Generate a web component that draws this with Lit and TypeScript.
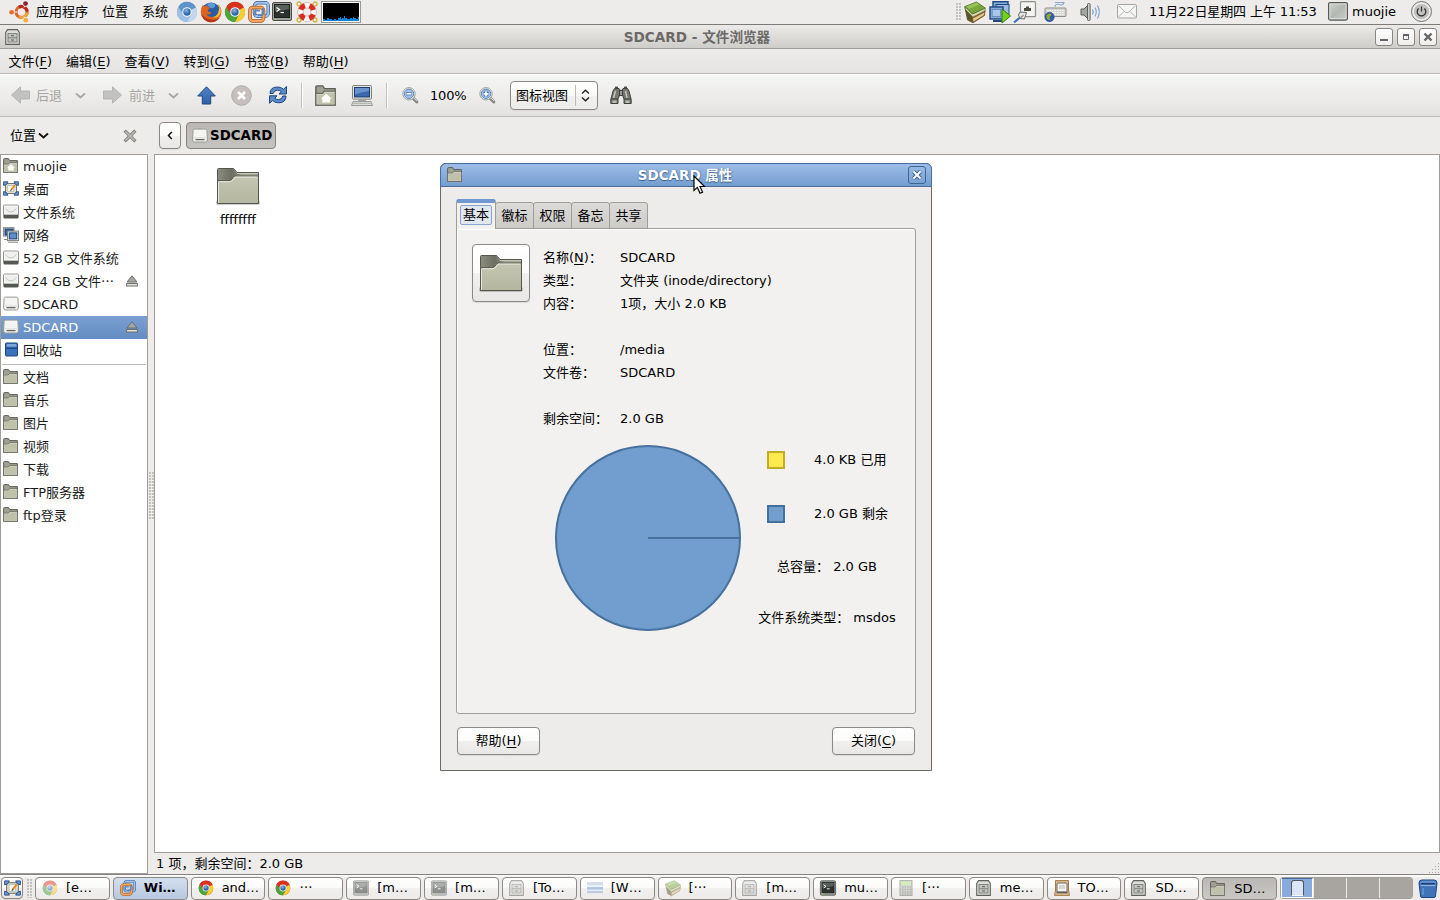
import { LitElement, html, svg, css, TemplateResult } from "lit";
import { customElement } from "lit/decorators.js";
import { classMap } from "lit/directives/class-map.js";

type Glyph = ReturnType<typeof svg>;

const icon = (size: number, box: string, body: Glyph, height = size): TemplateResult =>
  html`<svg class="ico" width=${size} height=${height} viewBox=${box}>${body}</svg>`;

const chromeBody = (a: string, b: string, c: string) => svg`
  <circle cx="11" cy="11" r="10" fill=${a}/>
  <path d="M11 11 L2.3 6 A10 10 0 0 0 11 21 L15 13.5 Z" fill=${b}/>
  <path d="M11 11 L19.9 6.4 A10 10 0 0 1 11 21 L15.4 13 Z" fill=${c}/>
  <path d="M11 6.4 L20 6.4 A10 10 0 0 0 2.3 6 L6.6 12.6 Z" fill=${a}/>
  <circle cx="11" cy="11" r="4.8" fill="#f4f6f8"/>
  <circle cx="11" cy="11" r="3.7" fill="url(#gBall)"/>`;

const chrome = chromeBody("#d8321f", "#4aa53a", "#f8cf2b");
const chromium = chromeBody("#5f93c9", "#9fc0e2", "#c3d8ee");

const ubuntu = svg`
  <circle cx="12.6" cy="12" r="5.5" fill="none" stroke="#e0662a" stroke-width="3.2"/>
  <path d="M9.8 7.300 A5.5 5.5 0 0 1 18.100 11.400" fill="none" stroke="#b9271d" stroke-width="3.2"/>
  <path d="M18.100 12.600 A5.5 5.5 0 0 1 9.800 16.700" fill="none" stroke="#eda03c" stroke-width="3.2"/>
  <path d="M8.500 12 L4 12 M15 7.500 L17 4 M15 16.500 L17 20" stroke="#edecea" stroke-width="1"/>
  <circle cx="2.6" cy="12.200" r="2.300" fill="#e8692c"/>
  <circle cx="16.500" cy="3.600" r="3.100" fill="#edecea"/><circle cx="16.500" cy="3.600" r="2.400" fill="#8f2430"/>
  <circle cx="16.800" cy="20.200" r="3.100" fill="#edecea"/><circle cx="16.800" cy="20.200" r="2.400" fill="#f0ae43"/>`;

const firefox = svg`
  <circle cx="11" cy="11" r="9.6" fill="#2a5ca6"/>
  <path d="M7 3 Q11 1 15 3 Q16 6 13 7 Q9 8 7 3Z" fill="#5f9ad8"/>
  <path d="M3 3.4 Q1 6 .8 11 A10.3 10.3 0 0 0 21.4 11 Q21.5 6 18 3 Q20 7 18.6 10 Q18 15 13 16 Q8 16.500 6.500 13 Q9 14 11 12.400 Q12 11.500 10 11 Q7 11 8 8.500 Q9.500 8 10 7 Q7.500 6.600 7 4.600 Q5 4.600 4 6Z" fill="#e0651c"/>
  <path d="M18 3 Q20 7 18.600 10 Q18 15 13 16 Q18 18 20.500 12 Q22 7 18 3Z" fill="#f8b838"/>
  <path d="M1.200 13 Q3 20 10 21.200 Q16 21.500 19.500 17 Q14 20 8.500 18 Q3.500 16 1.200 13Z" fill="#b3361a"/>`;

const vmware = svg`
  <rect x="6.500" y="1.800" width="13.700" height="13.500" rx="3" fill="none" stroke="#345f96" stroke-width="3.400"/>
  <rect x="6.500" y="1.800" width="13.700" height="13.500" rx="3" fill="none" stroke="#a4c3ea" stroke-width="1.900"/>
  <rect x="2" y="6.500" width="13.500" height="13.500" rx="3" fill="none" stroke="#a8541b" stroke-width="3.600"/>
  <rect x="2" y="6.500" width="13.500" height="13.500" rx="3" fill="none" stroke="#f3a45d" stroke-width="2.200"/>
  <path d="M7 14.500 V10.500 Q7 9.500 8.500 9.500 H12" fill="none" stroke="#5b86be" stroke-width="1.800"/>
  <path d="M10 14 H13 Q15 14 15 12 V7" fill="none" stroke="#5b86be" stroke-width="2"/>`;

const terminal = svg`
  <rect x=".5" y=".5" width="19" height="18" rx="1.500" fill="#9fa19d" stroke="#4c4f4b"/>
  <rect x="2.500" y="2.500" width="15" height="13" fill="#2c322f" stroke="#1b1e1c"/>
  <path d="M3 3 H17 V7 Q10 9 3 9Z" fill="#59615d"/>
  <path d="M4.500 5.500 L7.500 7.500 L4.500 9.500" fill="none" stroke="#fff" stroke-width="1.200"/>
  <path d="M8.500 10.500 H12" stroke="#fff" stroke-width="1.200"/>
  <rect x="2.500" y="16.500" width="2" height="1" fill="#8ae234"/>`;

const buoy = svg`
  <circle cx="3" cy="3" r="2" fill="none" stroke="#d2b43a" stroke-width="1.300"/><circle cx="19" cy="3" r="2" fill="none" stroke="#d2b43a" stroke-width="1.300"/>
  <circle cx="3" cy="19" r="2" fill="none" stroke="#d2b43a" stroke-width="1.300"/><circle cx="19" cy="19" r="2" fill="none" stroke="#d2b43a" stroke-width="1.300"/>
  <circle cx="11" cy="11" r="6.700" fill="none" stroke="#a9a6a0" stroke-width="6"/>
  <circle cx="11" cy="11" r="6.700" fill="none" stroke="#fbf8f4" stroke-width="5"/>
  <circle cx="11" cy="11" r="6.700" fill="none" stroke="#dc2a20" stroke-width="5" stroke-dasharray="5.800 4.724" stroke-dashoffset="-2.362"/>`;

const monitor = svg`
  <rect x=".5" y=".5" width="39" height="21" fill="#fff" stroke="#9b9995"/>
  <rect x="2" y="2" width="36" height="18" fill="#000"/>
  <path d="M2 20 V18 H4 V19 H6 V17 H8 V18 H11 V19 H13 V18 H15 V19 H17 V17 H19 V16 H20 V18 H21 V17 H23 V15 H24 V17 H26 V18 H29 V17 H31 V18 H32 V16 H33 V17 H35 V18 H37 V16 H38 V20Z" fill="#0a84d8"/>`;

const books = svg`
  <path d="M.8 6 L8.500 12 L21.200 9 L20.500 14.500 L9 21.800 L3.500 19 Z" fill="#8a5a2b" stroke="#5f3d18" stroke-width=".7"/>
  <path d="M9 17.500 L20.500 11.500 L20 14 L9.500 20.500Z" fill="#e3c98d"/>
  <path d="M1.500 8 L7.500 14.500 L8.500 20.500 L4 18.500 Z" fill="#4f5a2b"/>
  <path d="M8.500 13 L21.200 7 L21 9.700 L9 16 L1.500 8.500 L1 5.500Z" fill="#ddd8b4" stroke="#57782f" stroke-width=".6"/>
  <path d="M1 5.500 L12.500 1 L21.200 7 L8.500 13 Z" fill="#78a83c" stroke="#46692a" stroke-width=".8"/>
  <path d="M2 5.500 L12.500 1.400 L15.500 3.400 L5 8Z" fill="#98c257"/>`;

const vmPlay = svg`
  <rect x="4" y=".7" width="15" height="11" fill="#87abd9" stroke="#20497f" stroke-width="1.400"/>
  <rect x="7" y="3.500" width="13" height="10" fill="#9dbbe2" stroke="#20497f"/>
  <rect x="1" y="6" width="13" height="12" fill="#87abd9" stroke="#20497f" stroke-width="1.400"/>
  <rect x="3.200" y="8.500" width="8.500" height="7" fill="#a9c5e8" stroke="#5c87bb" stroke-width=".8"/>
  <rect x="4" y="19" width="10" height="2" fill="#20497f"/>
  <path d="M13 8 L21.500 15 L13 22Z" fill="#73d216" stroke="#3c7a10"/>`;

const wired = svg`
  <rect x="6.500" y=".7" width="15" height="15" rx="1" fill="#f4f4f2" stroke="#8e908c" stroke-width="1.200"/>
  <path d="M10 10 V7 H12 V5.500 H15 V7 H17 V10Z" fill="#4b4a3c"/>
  <path d="M0 21.500 L6 16.500" stroke="#3e6cb0" stroke-width="2"/>
  <path d="M4.500 14 L6 11 L12.500 11.500 L10.500 18 L6 17.500Z" fill="#e7e8e5" stroke="#6a6c68"/>
  <path d="M6.500 17 L9.500 14" stroke="#8f918d" stroke-width="1.400"/>`;

const keyboard = svg`
  <path d="M11 6 Q11 2.500 15 3.500 Q19 5 20 1.500 H11" fill="none" stroke="#89a8cf" stroke-width="1.100"/>
  <rect x="1" y="7" width="21" height="8.500" rx="1" fill="#d7d8d4" stroke="#8b8d88"/>
  <path d="M3 9.500 H20 M3 11.500 H20 M3 13.500 H20" stroke="#f6f6f4" stroke-dasharray="1.500 1"/>
  <circle cx="5.500" cy="16" r="4.700" fill="#305f9f" stroke="#234a80" stroke-width=".6"/>
  <path d="M2.500 14 Q4.500 12 6.500 12.500 L7.500 14 L5.500 16 L6.500 18.500 L4.500 19 L2.500 17Z" fill="#98a83c"/>`;

const speaker = svg`
  <path d="M1 8 H4 L8 4 V18 L4 14 H1Z" fill="#a4a6a2" stroke="#5d5f5b"/>
  <rect x="7.500" y="2.500" width="2.600" height="17" rx="1" fill="#d2d3d0" stroke="#5d5f5b"/>
  <path d="M12.500 8.500 Q14 11 12.500 13.500" fill="none" stroke="#7ba0cd" stroke-width="1.300"/>
  <path d="M15 6.500 Q17.500 11 15 15.500 M17.500 4.500 Q21 11 17.500 17.500" fill="none" stroke="#7ba0cd" stroke-width="1.100"/>`;

const mail = svg`
  <rect x=".5" y=".5" width="19" height="13.500" rx="1" fill="#f5f5f3" stroke="#a5a5a1"/>
  <path d="M1.500 1.500 L8 8 Q10 9.500 12 8 L18.500 1.500 M1.500 13 L7 7.500 M18.500 13 L13 7.500" fill="none" stroke="#b5b5b1"/>`;

const userSquare = svg`
  <rect x=".6" y=".6" width="18.800" height="17.500" rx="1.500" fill="#c1c5c0" stroke="#565956" stroke-width="1.200"/>
  <rect x="2" y="2" width="16" height="14.500" fill="url(#gUser)" stroke="#dfe1de" stroke-width=".8"/>`;

const power = svg`
  <circle cx="10.500" cy="10.500" r="10" fill="#e4e4e2" stroke="#737571" stroke-width="1"/>
  <circle cx="10.500" cy="10.500" r="8.200" fill="#c1c1bf" stroke="#f5f5f4"/>
  <path d="M7.600 7.500 A4.300 4.300 0 1 0 13.400 7.500 M10.500 5.500 V10.500" fill="none" stroke="#353735" stroke-width="1.300"/>`;

const cabinet = svg`
  <path d="M.7 15.400 V3.500 L2.500 .6 H12.500 L14.300 3.500 V15.400Z" fill="#dddedb" stroke="#5f615d" stroke-width="1.100" stroke-linejoin="round"/>
  <rect x="3" y="4.500" width="9" height="8.500" fill="#c3c5c1" stroke="#7b7d79" stroke-width=".9"/>
  <path d="M3 8.700 H12" stroke="#7b7d79" stroke-width=".9"/>
  <path d="M6 6.700 H9 M6 11 H9" stroke="#5f615d" stroke-width="1"/>`;

const smallFolder = svg`
  <path d="M.6 14.400 V1.500 Q.6 .6 1.500 .6 H5.500 L6.800 2.600 H14.400 V14.400Z" fill="#9fa192" stroke="#5d5f57"/>
  <path d="M1.200 14 V6.500 H5.500 L6.800 5 H14 V14Z" fill="#c0c1ab" stroke="#e3e3d8" stroke-width=".7"/>
  <path d="M.6 14.400 V6 H5.400 L6.600 4.400 H14.400 V14.400Z" fill="none" stroke="#6a6c62" stroke-width=".8"/>`;

const homeFolder = svg`${smallFolder}<path d="M8 6 L12 9.800 H10.800 V12.500 H5.200 V9.800 H4Z" fill="#fbfbf8"/>`;

const bigFolder = svg`
  <rect x="0" y="33" width="44" height="5" rx="2" fill="#000" opacity=".2"/>
  <path d="M1.500 36.500 V2.500 Q1.500 1.500 2.500 1.500 H17 Q18 1.500 18.500 2.500 L21 5.500 H42.500 V36.500Z" fill="#a3a594" stroke="#55574e" stroke-width="1"/>
  <path d="M2 14 V2 H17.500 L20.500 6 H30 L19 9 Q17 9 15.500 12 L14 14Z" fill="url(#gTab)"/>
  <path d="M21 6.500 H42" stroke="#c5c6b8"/>
  <path d="M1.500 36.500 V15 Q1.500 13.600 2.900 13.600 H13.500 Q15 13.500 16 12 Q17.500 9 19 9 H42.500 V36.500Z" fill="url(#gFold)" stroke="#55574e" stroke-width="1"/>
  <path d="M2.500 36 V15.300 Q2.500 14.700 3.200 14.700 H14 Q16 14.500 17 12.800 Q18.500 10.100 19.500 10.100 H41.500" fill="none" stroke="#e6e7dc" stroke-width="1"/>`;

const desktopIco = svg`
  <rect x="2.500" y="2.500" width="11" height="10" fill="#dfe0d6" stroke="#73756e"/>
  <path d="M.6 4.500 V.8 H5 L3.500 3.500Z M15.400 4.500 V.8 H11 L12.500 3.500Z M.6 10.500 V14.200 H5 L3.500 11.500Z M15.400 10.500 V14.200 H11 L12.500 11.500Z" fill="#6c96ce" stroke="#2a4f8a" stroke-width=".9"/>
  <rect x="4.800" y="4.500" width="6" height="6" fill="#fff" stroke="#9fa892" stroke-width=".6"/>
  <path d="M8 9 L12 4" stroke="#ea8517" stroke-width="1.800"/><path d="M7.400 10 L8.600 8.500" stroke="#444"/>`;

const disk = svg`
  <rect x=".6" y="1.100" width="14.800" height="13" rx="1" fill="#e3e4e1" stroke="#83857f"/>
  <rect x="1" y="10.500" width="14" height="3.600" fill="#555753"/>
  <rect x="1.600" y="2" width="12.800" height="8" fill="#eff0ee" stroke="#fafaf9" stroke-width=".8"/>
  <path d="M2.500 4.500 Q8 11.500 13.500 4.500" fill="none" stroke="#c6c8c3"/>`;

const removable = svg`
  <path d="M2.500 1.100 H13.500 Q14.700 1.100 14.900 2.500 L15.400 11 Q15.400 14 13.500 14 H2.500 Q.6 14 .6 11 L1.100 2.500 Q1.300 1.100 2.500 1.100Z" fill="#f4f4f2" stroke="#989a95"/>
  <path d="M1.500 10 H14.500" stroke="#d9dad7"/>
  <path d="M3.500 11.600 H12.500" stroke="#646661" stroke-width="1.300"/>`;

const network = svg`
  <rect x=".5" y=".6" width="10.500" height="8.500" fill="#e8e9e7" stroke="#8a8c88"/>
  <rect x="2" y="2" width="8" height="6" fill="#3967a8" stroke="#1e3f73"/>
  <path d="M1 12.500 H5 V10.500" fill="none" stroke="#8a8c88" stroke-width="1.200"/>
  <rect x="4.500" y="4.100" width="11" height="9.500" fill="#f0f0ee" stroke="#7d7f7b"/>
  <rect x="6.300" y="5.900" width="7.500" height="6" fill="#5d8dcb" stroke="#1e3f73"/>
  <path d="M5 15.200 H15" stroke="#8a8c88"/>`;

const bin = svg`
  <path d="M2.500 2 Q2.500 1 3.500 1 H13.500 Q14.500 1 14.500 2 V13 Q14.500 14 13.500 14 H3.500 Q2.500 14 2.500 13Z" fill="#3b72bd" stroke="#1f4480"/>
  <rect x="3.800" y="2" width="9.500" height="2.600" fill="#7ea7dc"/>
  <path d="M3 6.300 H14" stroke="#1f4480" stroke-width="1.300"/>`;

const bigBin = svg`
  <path d="M1 4 Q1 1 4 1 H16 Q19 1 19 4 L17.500 17 Q17.400 18.500 16 18.500 H4 Q2.600 18.500 2.500 17Z" fill="#3f74ba" stroke="#1f4480"/>
  <path d="M3 1.800 H17 L18 3.500 L17 5 H3 L2 3.500Z" fill="#5f91d2"/>
  <path d="M3 4 H17 L16.500 5.600 H3.500Z" fill="#1d3d6e"/>
  <path d="M2.600 6.500 H17.400" stroke="#8fb3e2" stroke-width="1.200"/>
  <path d="M5 9 V16" stroke="#5d8ccc" stroke-width="2"/>`;

const eject = svg`
  <path d="M6 .8 L11 7 H1Z" fill="#a6a8a4" stroke="#6b6d69"/>
  <rect x=".6" y="8.500" width="10.800" height="2.500" fill="#e4e5e2" stroke="#6b6d69"/>`;

const arrowLeft = svg`<path d="M.5 9 L9.500 .8 V5 H18.500 V13 H9.500 V17.200Z" fill="#c1c2c1" stroke="#b4b5b4"/>`;
const arrowRight = svg`<path d="M18.500 9 L9.500 .8 V5 H.5 V13 H9.500 V17.200Z" fill="#c1c2c1" stroke="#b4b5b4"/>`;
const arrowUp = svg`<path d="M9.500 .8 L18.300 10 H13.700 V18 H5.300 V10 H.7Z" fill="url(#gUp)" stroke="#1f477f"/>`;
const chevron = (c: string) => svg`<path d="M1 1.500 L5.500 5.500 L10 1.500" fill="none" stroke=${c} stroke-width="1.800"/>`;
const stop = svg`
  <circle cx="10.500" cy="10.500" r="9.800" fill="#c5c0be" stroke="#b1adab"/>
  <path d="M7 7 L14 14 M14 7 L7 14" stroke="#fff" stroke-width="2.600"/>`;
const refresh = svg`
  <path d="M2 8.500 Q2 2 9.500 2 Q13 2 15.500 4.200 L18.500 1.500 V9 H11 L13.200 6.500 Q11.500 5 9.300 5.200 Q6 5.500 5.200 8.500Z" fill="#5c8bc9" stroke="#1f477f"/>
  <path d="M18 11 Q18 17.800 10.500 17.800 Q7 17.800 4.500 15.600 L1.500 18.300 V10.800 H9 L6.800 13.300 Q8.500 14.800 10.700 14.600 Q14 14.300 14.800 11Z" fill="#5c8bc9" stroke="#1f477f"/>`;
const computer = svg`
  <rect x="1.600" y=".6" width="18.800" height="13.500" rx=".8" fill="#eeeeec" stroke="#777974"/>
  <rect x="3.500" y="2.500" width="15" height="9.500" fill="#3a69ad" stroke="#1d3f73"/>
  <path d="M4 3 H18 V6 Q11 6.500 4 9.500Z" fill="#6a93cd"/>
  <rect x="7" y="14.200" width="8" height="1.800" fill="#a3a5a0"/>
  <path d="M2 16.500 H20 L21.500 20.500 H.5Z" fill="#dcddda" stroke="#888a85" stroke-width=".8"/>
  <path d="M2.500 18.300 H19.500" stroke="#888a85" stroke-dasharray="1.200 .8"/>`;
const lens = (plus: boolean) => svg`
  <path d="M11 11 L14.800 14.800" stroke="#8a8c88" stroke-width="3.200" stroke-linecap="round"/>
  <path d="M11.500 10.500 L15 14" stroke="#d5d6d3" stroke-width="1"/>
  <circle cx="7" cy="6.800" r="6.200" fill="#f3f3f2" stroke="#9c9e99"/>
  <circle cx="7" cy="6.800" r="4.700" fill="#a5c2e6" stroke="#5b87bd"/>
  <path d=${plus ? "M4 6.800 H10 M7 3.800 V9.800" : "M4 6.800 H10"} stroke="#3c6aa8" stroke-width="3"/>
  <path d=${plus ? "M4.400 6.800 H9.600 M7 4.200 V9.400" : "M4.400 6.800 H9.600"} stroke="#fff" stroke-width="1.700"/>`;
const binoculars = svg`
  <path d="M4.500 2.500 H9 L10 4 V8 L8 13 V17.500 H.8 V13.500 L3 5Z" fill="#767870" stroke="#3e403d"/>
  <path d="M17.500 2.500 H13 L12 4 V8 L14 13 V17.500 H21.200 V13.500 L19 5Z" fill="#767870" stroke="#3e403d"/>
  <rect x="9.500" y="4.500" width="3" height="5" fill="#9a9c94" stroke="#3e403d"/>
  <rect x="5" y=".6" width="3" height="2" fill="#4a4c48"/><rect x="14" y=".6" width="3" height="2" fill="#4a4c48"/>
  <path d="M5.500 5 L3.500 12 M15.500 5 L17 12" stroke="#c2c3bc" stroke-width="1.500"/>
  <path d="M1 13 H8 M14 13 H21" stroke="#3e403d"/>
  <rect x="2.500" y="14.500" width="4" height="2.500" fill="#b9bbb2"/><rect x="15.500" y="14.500" width="4" height="2.500" fill="#b9bbb2"/>`;
const closeGray = svg`
  <path d="M2 2 L11 11 M11 2 L2 11" stroke="#777a75" stroke-width="3.600" stroke-linecap="square"/>
  <path d="M2 2 L11 11 M11 2 L2 11" stroke="#b9bbb7" stroke-width="1.800" stroke-linecap="square"/>`;
const spreadsheet = svg`
  <rect x="0" y="2" width="16" height="12" fill="#dfe8f5"/>
  <rect x="0" y="2" width="16" height="3" fill="#a8bfe2"/>
  <rect x="0" y="7" width="16" height="2.500" fill="#6e99d6"/><rect x="0" y="11" width="16" height="2" fill="#8aacdc"/>`;
const calculator = svg`
  <rect x="2" y=".6" width="12" height="14.800" fill="#b8bab5" stroke="#666864"/>
  <rect x="3" y="1.500" width="10" height="3.500" fill="#aede7a"/>
  <path d="M4 7 H13 M4 9.500 H13 M4 12 H13 M4 14 H13" stroke="#747672" stroke-width="1.300" stroke-dasharray="1.500 1"/>`;
const editor = svg`
  <path d="M1.500 .6 H14.500 V10 L15.500 15.400 H.5 L1.500 10Z" fill="#dfbb8b" stroke="#a07a4c"/>
  <rect x="3" y="3" width="10" height="9" rx="1" fill="#f3f3f0" stroke="#6b6b68"/>
  <path d="M5 6 H11 M5 8 H11" stroke="#b9b9b5"/>
  <path d="M2.500 12.500 H13.500" stroke="#5b5b58" stroke-width="1.600"/>`;

interface Place { label: string; art: Glyph; dots?: boolean; ejectable?: boolean; selected?: boolean }
const places: Place[] = [
  { label: "muojie", art: homeFolder },
  { label: "桌面", art: desktopIco },
  { label: "文件系统", art: disk },
  { label: "网络", art: network },
  { label: "52 GB 文件系统", art: disk },
  { label: "224 GB 文件", art: disk, dots: true, ejectable: true },
  { label: "SDCARD", art: removable },
  { label: "SDCARD", art: removable, ejectable: true, selected: true },
  { label: "回收站", art: bin },
];
const bookmarks = ["文档", "音乐", "图片", "视频", "下载", "FTP服务器", "ftp登录"];

const menus: [string, string][] = [["文件", "F"], ["编辑", "E"], ["查看", "V"], ["转到", "G"], ["书签", "B"], ["帮助", "H"]];

interface Task { label: string; art: Glyph; box?: string; mid?: boolean; dim?: boolean; state?: string }
const tasks: Task[] = [
  { label: "[e", art: chrome, box: "0 0 22 22", dim: true },
  { label: "Wi", art: vmware, box: "0 0 22 22", state: "alert" },
  { label: "and", art: chrome, box: "0 0 22 22" },
  { label: "", art: chrome, box: "0 0 22 22", mid: true },
  { label: "[m", art: terminal, box: "0 0 20 19", dim: true },
  { label: "[m", art: terminal, box: "0 0 20 19", dim: true },
  { label: "[To", art: cabinet, dim: true },
  { label: "[W", art: spreadsheet, dim: true },
  { label: "[", art: books, box: "0 0 22 22", mid: true, dim: true },
  { label: "[m", art: cabinet, dim: true },
  { label: "mu", art: terminal, box: "0 0 20 19" },
  { label: "[", art: calculator, mid: true, dim: true },
  { label: "me", art: cabinet },
  { label: "TO", art: editor },
  { label: "SD", art: cabinet },
  { label: "SD", art: smallFolder, state: "pressed" },
];

const midDots = html`<span class="cjk">…</span>`;

@customElement("app-root")
export class AppRoot extends LitElement {
  static styles = css`
    :host { display: flex; flex-direction: column; position: relative; width: 1440px; height: 900px; overflow: hidden;
      background: #edecea; color: #000; font: 13px/23px "DejaVu Sans", "Noto Sans CJK SC", sans-serif; white-space: nowrap; }
    * { box-sizing: border-box; }
    .ico { display: block; flex: none; overflow: visible; }
    .defs { position: absolute; width: 0; height: 0; }
    .cjk { font-family: "Noto Sans CJK SC", sans-serif; line-height: 1; }
    u { text-decoration: underline; text-underline-offset: 2px; text-decoration-thickness: 1px; text-decoration-skip-ink: none; }

    .panel { display: flex; justify-content: space-between; height: 24px; flex: none; }
    .apps { display: grid; align-items: center; grid-template-columns: 27px 66px 40px 34px 24px 24px 24px 24px 24px 25px 40px; padding-left: 9px; height: 23px; }
    .tray { display: grid; align-items: center; grid-template-columns: 8px 25px 25px 30px 36px 37px 32px 179px 24px 59px 22px; width: 484px; height: 23px; }
    .date { letter-spacing: -.12px; }
    .grip { width: 5px; height: 18px; background: radial-gradient(circle at 1px 1px, #c2c0bd .7px, transparent .9px) 0 0 / 3px 3px; }

    .title { display: grid; grid-template-columns: 76px 1fr 124px; align-items: center; height: 25px; flex: none; padding: 1px 3px 0 5px;
      border-top: 1px solid #7d7a76; border-bottom: 1px solid #a3a09c;
      background: linear-gradient(#ecebe9, #cfcdca); color: #6b6967; font-weight: bold; font-size: 13.600px; text-align: center; }
    .title > .ico { margin-top: -1px; }
    .wbtns { display: flex; gap: 4px; justify-content: flex-end; margin-top: -1px; }
    .wbtn { width: 18px; height: 18px; border: 1px solid #898683; border-radius: 3px; background: linear-gradient(#fff, #eeedec); display: grid; place-items: center; }

    .menus { display: flex; gap: 13.950px; height: 25px; padding-left: 8.500px; flex: none; background: linear-gradient(#edecea, #e4e3e1); border-bottom: 1px solid #bdbab7; line-height: 25px; }
    .tools { display: grid; align-items: center; height: 43px; flex: none; padding-left: 11px; background: linear-gradient(#fff 0, #f5f5f3 2px, #e4e3e1); border-bottom: 1px solid #bdbab7;
      grid-template-columns: 25px 39px 28px 26px 39px 29px 34px 37px 33px 14px 36px 35px 16px 28px 49px 31px 100px 22px; }
    .off { color: #a9a6a3; }
    .pct { letter-spacing: -.2px; }
    .sep { width: 2px; height: 25px; background: linear-gradient(90deg, #c3c1be 50%, #fff 50%); }
    .combo { display: flex; align-items: center; width: 88px; height: 29px; border: 1px solid #8b8885; border-radius: 4px; background: linear-gradient(#fff, #f9f9f8 50%, #f1f0ef 50%, #ececea); padding-left: 5px; box-shadow: 0 1px 1px #dad8d5; }
    .combo .bar { width: 1px; height: 21px; background: #bdbab7; margin: 0 5px 0 7px; }

    .loc { display: grid; grid-template-columns: 114px 35px 27px 90px; align-items: center; height: 37px; flex: none; padding-left: 10px; }
    .loc .head { display: flex; align-items: center; gap: 2px; }
    .btn { border: 1px solid #8b8885; border-radius: 4px; background: linear-gradient(#fff, #fbfbfa 50%, #f1f0ef 50%, #e8e7e5); display: flex; align-items: center; justify-content: center; box-shadow: 0 1px 1px #dcdad7; }
    .back { width: 22px; height: 27px; }
    .crumb { display: flex; align-items: center; width: 90px; height: 27px; padding-left: 5px; gap: 2px; font-weight: bold; font-size: 13.400px; border: 1px solid #85827f; border-radius: 4px; background: linear-gradient(#bab7b4, #c5c3c0); }

    .body { display: flex; height: 720px; flex: none; }
    .side { width: 148px; height: 720px; border: 1px solid #a09d99; background: #fff; }
    .row { display: grid; grid-template-columns: 20px 103px 14px; align-items: center; height: 23px; padding-left: 2px; color: #1a1a1a; }
    .row .ico { margin-top: -1px; }
    .row.selected { color: #fff; background: linear-gradient(#7ba0d3, #648dc3); }
    .rule { height: 1px; background: #bdbab7; margin: 2px 1px 1px; }
    .split { width: 6px; display: flex; align-items: center; justify-content: center; padding-bottom: 36px; }
    .split .grip { height: 48px; }
    .main { flex: 1; display: flex; flex-direction: column; }
    .files { height: 699px; border: 1px solid #a09d99; background: #fff; padding: 12px 0 0 45px; }
    .file { display: flex; flex-direction: column; align-items: center; width: 76px; gap: 2px; }
    .status { display: flex; justify-content: space-between; padding-left: 2px; line-height: 21px; height: 21px; }

    .tasks { display: grid; grid-template-columns: 22px 12px 1242px 134px 22px; height: 26px; padding: 2px 0 0 1px; border-top: 1px solid #85827f; background: linear-gradient(#fff, #edecea 3px); flex: none; }
    .show { width: 22px; height: 22px; }
    .tasks > .grip { margin: 2px 0 0 4px; height: 19px; }
    .list { display: grid; grid-template-columns: repeat(16, 1fr); gap: 3px; }
    .task { display: flex; align-items: center; gap: 8px; height: 23px; padding-left: 6px; border: 1px solid #8b8885; border-radius: 4px; background: linear-gradient(#fff, #fbfbfa 50%, #f1f0ef 50%, #ecebe9); line-height: 19px; }
    .task > span { height: 21px; }
    .task > .ico { margin-top: -1px; }
    .task.alert { background: linear-gradient(#d3dfef, #b6c8df); font-weight: bold; }
    .task.pressed { background: linear-gradient(#bab7b4, #cbc9c6); padding: 1px 0 0 7px; }
    .dim .ico { opacity: .5; }
    .pager { display: grid; grid-template-columns: repeat(4, 1fr); gap: 1px; height: 22px; width: 133px; margin-left: 3px; border: 1px solid #a39f9b; border-radius: 3px; background: #edecea; overflow: hidden; }
    .desk { background: #a8a4a0; }
    .desk.on { background: #86abdc; border: 1px solid #fff; border-top-color: #46699a; display: grid; place-items: center; }
    .mini { width: 13px; height: 16px; background: #d8e6f7; border: 1px solid #555; border-bottom-color: #fff; border-radius: 3px 3px 0 0; }
    .tasks > .ico { margin: 2px 0 0 7px; }

    .dialog { position: absolute; left: 440px; top: 163px; width: 492px; height: 608px; border: 1px solid #6b6966; border-radius: 6px 6px 0 0; background: #edecea; }
    .dtitle { display: grid; grid-template-columns: 60px 1fr 61px; align-items: center; height: 24px; margin: -1px -1px 0; padding: 0 7px 0 6px; text-align: center; color: #fff; font-weight: bold; font-size: 13.500px; line-height: 21px; text-shadow: 0 1px 1px #3e638f, 1px 0 1px #5c82b4;
      border: 1px solid #4a6d9c; border-radius: 6px 6px 0 0; background: linear-gradient(#9dbde8, #749dd0); }
    .dclose { justify-self: end; width: 18px; height: 18px; border: 1px solid #3f6593; border-radius: 3px; display: grid; place-items: center; margin: -1px -2px 0 0; }
    .tabs { display: flex; align-items: flex-end; height: 30px; margin: 12px 0 -1px 15px; position: relative; }
    .tab { width: 39px; margin-right: -1px; height: 27px; border: 1px solid #a09d99; border-radius: 3px 3px 0 0; background: linear-gradient(#dddbd9, #cdcbc8); text-align: center; line-height: 26px; }
    .tab.on { width: 40px; height: 30px; border-bottom: 0; border-top: 4px solid #6e98cf; background: #f2f1ef; padding: 2px 3px; }
    .focus { display: block; height: 20px; line-height: 18px; border: 1px solid #88a5cd; border-radius: 2px; background: #e1e7ef; }
    .page { width: 460px; height: 486px; margin-left: 15px; border: 1px solid #a09d99; border-radius: 0 3px 3px 3px; background: #f2f1ef; box-shadow: inset 1px 1px #fff; padding: 15px 0 0 15px; }
    .info { display: grid; grid-template-columns: 71px 77px 1fr; grid-auto-rows: 23px; padding-top: 2px; margin-right: 2px; }
    .pic { grid-row: 1 / 5; width: 58px; height: 58px; margin-top: -2px; padding: 0; }
    .info > b { font-weight: normal; grid-column: 2; }
    .usage { display: grid; grid-template-columns: 203px 138px; padding: 15px 0 0 83px; }
    .pie { width: 186px; height: 186px; }
    .legend { display: grid; grid-template-rows: 54px 53px 51px 23px; padding: 3px 0 0; }
    .key { display: grid; grid-template-columns: 47px 1fr; margin-left: 9px; height: 23px; align-items: center; }
    .swatch { width: 18px; height: 18px; border: 2px solid #46709d; background: #719ecf; }
    .swatch.used { border-color: #bfae26; background: #fce94f; }
    .center { text-align: center; }
    .foot { display: flex; justify-content: space-between; padding: 13px 16px 0; }
    .foot .btn { width: 83px; height: 28px; padding-bottom: 2px; }
    .cursor { position: absolute; left: 693px; top: 175px; }
  `;

  render() {
    return html`
      <svg class="defs"><defs>
        <radialGradient id="gBall" cx=".4" cy=".3"><stop offset="0" stop-color="#8db6ea"/><stop offset="1" stop-color="#2f66b0"/></radialGradient>
        <linearGradient id="gUser" x2="1" y2="1"><stop offset="0" stop-color="#ccd0cb"/><stop offset=".5" stop-color="#b4b8b3"/><stop offset="1" stop-color="#c6cac5"/></linearGradient>
        <linearGradient id="gFold" x2="0" y2="1"><stop offset="0" stop-color="#c6c7b3"/><stop offset="1" stop-color="#b4b69f"/></linearGradient>
        <linearGradient id="gTab" x2="1" y2="0"><stop offset="0" stop-color="#8a8c7d"/><stop offset=".5" stop-color="#6c6e62"/><stop offset="1" stop-color="#a3a594"/></linearGradient>
        <linearGradient id="gUp" x2="0" y2="1"><stop offset="0" stop-color="#5585c6"/><stop offset="1" stop-color="#2d60a6"/></linearGradient>
      </defs></svg>

      <div class="panel">
        <div class="apps">
          ${icon(21, "0 0 21 23", ubuntu, 23)}<span>应用程序</span><span>位置</span><span>系统</span>
          ${icon(22, "0 0 22 22", chromium)}${icon(22, "0 0 22 22", firefox)}${icon(22, "0 0 22 22", chrome)}
          ${icon(22, "0 0 22 22", vmware)}${icon(20, "0 0 20 19", terminal, 19)}${icon(22, "0 0 22 22", buoy)}
          ${icon(40, "0 0 40 22", monitor, 22)}
        </div>
        <div class="tray">
          <i class="grip"></i>
          ${icon(22, "0 0 22 22", books)}${icon(22, "0 0 22 22", vmPlay)}${icon(22, "0 0 22 22", wired)}
          ${icon(22, "0 0 22 22", keyboard)}${icon(22, "0 0 22 22", speaker)}${icon(20, "0 0 20 15", mail, 15)}
          <span class="date">11月22日星期四 上午 11:53</span>
          ${icon(20, "0 0 20 19", userSquare, 19)}<span>muojie</span>${icon(21, "0 0 21 21", power)}
        </div>
      </div>

      <div class="title">
        ${icon(15, "0 0 15 16", cabinet, 16)}<span>SDCARD - 文件浏览器</span>
        <div class="wbtns">
          <i class="wbtn">${icon(10, "0 0 10 10", svg`<path d="M1 8 H9" stroke="#666" stroke-width="2"/>`)}</i>
          <i class="wbtn">${icon(10, "0 0 10 10", svg`<path d="M2.500 7.500 V3 H7.500 V7.500Z" fill="none" stroke="#666"/><path d="M2 3 H8" stroke="#666" stroke-width="2"/>`)}</i>
          <i class="wbtn">${icon(10, "0 0 10 10", svg`<path d="M1.500 1.500 L8.500 8.500 M8.500 1.500 L1.500 8.500" stroke="#666" stroke-width="2.400"/>`)}</i>
        </div>
      </div>

      <div class="menus">${menus.map(([t, k]) => html`<span>${t}(<u>${k}</u>)</span>`)}</div>

      <div class="tools">
        ${icon(19, "0 0 19 18", arrowLeft, 18)}<span class="off">后退</span>${icon(11, "0 0 11 7", chevron("#a9a6a3"), 7)}
        ${icon(19, "0 0 19 18", arrowRight, 18)}<span class="off">前进</span>${icon(11, "0 0 11 7", chevron("#a9a6a3"), 7)}
        ${icon(19, "0 0 19 19", arrowUp)}${icon(21, "0 0 21 21", stop)}${icon(20, "0 0 20 20", refresh)}
        <i class="sep"></i>${icon(21, "0 0 15 15", homeFolder)}${icon(22, "0 0 22 21", computer, 21)}
        <i class="sep"></i>${icon(17, "0 0 17 17", lens(false))}<span class="pct">100%</span>${icon(17, "0 0 17 17", lens(true))}
        <div class="combo"><span>图标视图</span><i class="bar"></i>
          ${icon(9, "0 0 9 13", svg`<path d="M1 4.500 L4.500 1.200 L8 4.500 M1 8.500 L4.500 11.800 L8 8.500" fill="none" stroke="#222" stroke-width="1.400"/>`, 13)}
        </div>
        ${icon(22, "0 0 22 18", binoculars, 18)}
      </div>

      <div class="loc">
        <span class="head">位置${icon(11, "0 0 11 7", chevron("#111"), 7)}</span>
        ${icon(12, "0 0 13 13", closeGray)}
        <span class="btn back">${icon(6, "0 0 6 9", svg`<path d="M4.800 1 L1.500 4.500 L4.800 8" fill="none" stroke="#111" stroke-width="1.500"/>`, 9)}</span>
        <span class="crumb">${icon(16, "0 0 16 16", removable)}SDCARD</span>
      </div>

      <div class="body">
        <div class="side">
          ${places.map((p) => html`<div class=${classMap({ row: true, selected: !!p.selected })}>
            ${icon(16, "0 0 16 16", p.art)}<span>${p.label}${p.dots ? midDots : ""}</span>
            ${p.ejectable ? icon(12, "0 0 12 12", eject) : ""}</div>`)}
          <div class="rule"></div>
          ${bookmarks.map((b) => html`<div class="row">${icon(16, "0 0 16 16", smallFolder)}<span>${b}</span></div>`)}
        </div>
        <div class="split"><i class="grip"></i></div>
        <div class="main">
          <div class="files"><div class="file">${icon(44, "0 0 44 39", bigFolder, 39)}<span>ffffffff</span></div></div>
          <div class="status"><span>1 项，剩余空间：2.0 GB</span>
            ${icon(12, "0 0 12 21", svg`<path d="M10 10.500 H12 M7 13.500 H12 M4 16.500 H12 M1 19.500 H12" stroke="#aaa7a3" stroke-dasharray="1 2"/>`, 21)}
          </div>
        </div>
      </div>

      <div class="tasks">
        <span class="btn show">${icon(17, "0 0 16 15", desktopIco, 16)}</span>
        <i class="grip"></i>
        <div class="list">
          ${tasks.map((t) => html`<div class=${classMap({ task: true, dim: !!t.dim, alert: t.state === "alert", pressed: t.state === "pressed" })}>
            ${icon(16, t.box ?? "0 0 16 16", t.art)}<span>${t.label}${t.mid ? midDots : "…"}</span></div>`)}
        </div>
        <div class="pager"><i class="desk on"><i class="mini"></i></i><i class="desk"></i><i class="desk"></i><i class="desk"></i></div>
        ${icon(20, "0 0 20 19", bigBin, 19)}
      </div>

      <div class="dialog">
        <div class="dtitle">
          ${icon(16, "0 0 16 16", smallFolder)}<span>SDCARD 属性</span>
          <i class="dclose">${icon(10, "0 0 10 10", svg`<path d="M1.500 1.500 L8.500 8.500 M8.500 1.500 L1.500 8.500" stroke="#3f6593" stroke-width="4"/><path d="M1.500 1.500 L8.500 8.500 M8.500 1.500 L1.500 8.500" stroke="#fff" stroke-width="2"/>`)}</i>
        </div>
        <div class="tabs">
          <span class="tab on"><span class="focus">基本</span></span>
          ${["徽标", "权限", "备忘", "共享"].map((t) => html`<span class="tab">${t}</span>`)}
        </div>
        <div class="page">
          <div class="info">
            <span class="btn pic">${icon(44, "0 0 44 39", bigFolder, 39)}</span>
            <b>名称(<u>N</u>)：</b><span>SDCARD</span>
            <b>类型：</b><span>文件夹 (inode/directory)</span>
            <b>内容：</b><span>1项，大小 2.0 KB</span>
            <b></b><span></span>
            <b>位置：</b><span>/media</span>
            <b>文件卷：</b><span>SDCARD</span>
            <b></b><span></span>
            <b>剩余空间：</b><span>2.0 GB</span>
          </div>
          <div class="usage">
            <svg class="pie" viewBox="0 0 186 186"><circle cx="93" cy="93" r="92" fill="#719ecf" stroke="#46709d" stroke-width="2"/><path d="M93 93 H185" stroke="#46709d" stroke-width="2"/></svg>
            <div class="legend">
              <div class="key"><i class="swatch used"></i><span>4.0 KB 已用</span></div>
              <div class="key"><i class="swatch"></i><span>2.0 GB 剩余</span></div>
              <div class="center">总容量： 2.0 GB</div>
              <div class="center">文件系统类型： msdos</div>
            </div>
          </div>
        </div>
        <div class="foot"><span class="btn">帮助(<u>H</u>)</span><span class="btn">关闭(<u>C</u>)</span></div>
      </div>

      <svg class="cursor" width="14" height="21" viewBox="0 0 14 21">
        <path d="M1 1 V15.500 L4.400 12.400 L7 18.300 L9.600 17.100 L7 11.500 H11.500Z" fill="#fff" stroke="#000" stroke-width="1.200"/>
      </svg>
    `;
  }
}
